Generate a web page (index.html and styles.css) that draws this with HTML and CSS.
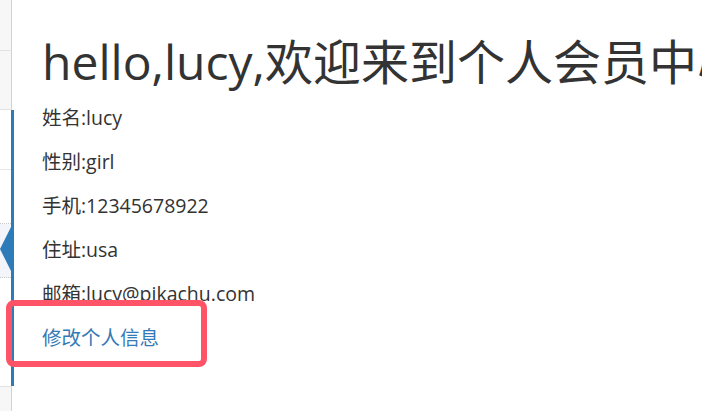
FILE: index.html
```html
<!DOCTYPE html>
<html lang="zh-CN">
<head>
  <meta charset="UTF-8">
  <meta name="viewport" content="width=device-width, initial-scale=1.0">
  <title>个人会员中心</title>
  <link rel="stylesheet" href="styles.css">
</head>
<body>
  <aside class="sidebar">
    <div class="menu-item first"></div>
    <div class="menu-item"></div>
    <div class="submenu">
      <div class="sub-item"></div>
      <div class="sub-item"></div>
      <div class="sub-item active"><span class="arrow"></span></div>
      <div class="sub-item"></div>
      <div class="sub-item last"></div>
    </div>
    <div class="menu-item rest"></div>
  </aside>

  <main class="content">
    <h1>hello,lucy,欢迎来到个人会员中心</h1>
    <ul class="info">
      <li>姓名:lucy</li>
      <li>性别:girl</li>
      <li>手机:12345678922</li>
      <li>住址:usa</li>
      <li>邮箱:lucy@pikachu.com</li>
      <li><a href="#">修改个人信息</a></li>
    </ul>
  </main>

  <div class="mark"></div>
</body>
</html>
```

FILE: styles.css
```css
html, body { margin: 0; padding: 0; height: 100%; }
body { display: flex; overflow: hidden; background: #fff; color: #333; font-family: "Open Sans", "Noto Sans CJK SC", sans-serif; }

.sidebar { display: flex; flex-direction: column; align-items: flex-start; width: 14px; flex-shrink: 0; }
.menu-item { width: 11px; background: #f7f7f7; border-right: 1px solid #d2d2d2; border-bottom: 1px solid #e2e2e2; height: 58px; }
.menu-item.first { height: 50px; }
.menu-item.rest { flex: 1; border-bottom: none; border-top: 1px solid #e2e2e2; }
.submenu { width: 11px; border-right: 3px solid #2d7bb8; background: #fff; }
.sub-item { height: 59px; border-bottom: 1px solid #e6e6e6; position: relative; }
.sub-item:nth-child(2) { height: 53px; border-bottom: 1px dotted #c8c8c8; }
.sub-item.active { height: 53px; background: #f3f5fa; border-bottom: 1px dotted #c8c8c8; }
.sub-item:nth-child(4) { height: 52px; border-bottom: none; }
.sub-item.last { height: 56px; border-bottom: none; }
.arrow { position: absolute; right: 0; top: 3px; width: 0; height: 0; border-top: 22px solid transparent; border-bottom: 22px solid transparent; border-right: 11px solid #2d7bb8; }

.content { flex: 1; min-width: 0; padding-left: 28px; white-space: nowrap; overflow: hidden; }
.content h1 { font-size: 48px; font-weight: normal; line-height: 52px; margin: 36px 0 8px; color: #333; }
.info { list-style: none; margin: 0; padding: 0; font-size: 19.5px; line-height: 44px; }
.info a { color: #337ab7; text-decoration: none; }

.mark { position: absolute; left: 6px; top: 300px; width: 189px; height: 55px; border: 6px solid #ff5468; border-radius: 8px; }
```
